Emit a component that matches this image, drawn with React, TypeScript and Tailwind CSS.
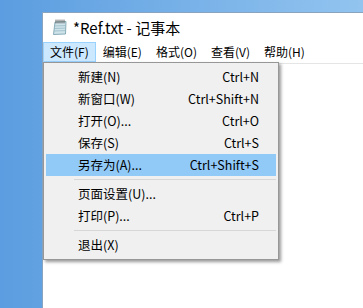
const font = "font-['Segoe_UI','Noto_Sans_CJK_SC',sans-serif]";

type Item = { label: string; shortcut?: string; active?: boolean } | "sep";

const items: Item[] = [
  { label: "新建(N)", shortcut: "Ctrl+N" },
  { label: "新窗口(W)", shortcut: "Ctrl+Shift+N" },
  { label: "打开(O)...", shortcut: "Ctrl+O" },
  { label: "保存(S)", shortcut: "Ctrl+S" },
  { label: "另存为(A)...", shortcut: "Ctrl+Shift+S", active: true },
  "sep",
  { label: "页面设置(U)..." },
  { label: "打印(P)...", shortcut: "Ctrl+P" },
  "sep",
  { label: "退出(X)" },
];

const menus = ["文件(F)", "编辑(E)", "格式(O)", "查看(V)", "帮助(H)"];

const NotepadIcon = () => (
  <svg width="16" height="16" viewBox="0 0 16 16">
    <path d="M3 3 L14 2.5 L13.5 15 L1.5 15.5 Z" fill="#cfe3ea" stroke="#6f9aa8" strokeWidth="0.8" />
    <path d="M2.2 7 L13.8 6.6 M2 9.5 L13.7 9.1 M1.9 12 L13.6 11.6" stroke="#8fb4c2" strokeWidth="0.7" />
    {[4, 6, 8, 10, 12].map((x) => (
      <path key={x} d={`M${x} 1 L${x} 4`} stroke="#555" strokeWidth="0.9" strokeLinecap="round" />
    ))}
  </svg>
);

export default function App() {
  return (
    <div
      className={`relative w-[363px] h-[308px] overflow-hidden bg-gradient-to-r from-[#5b9de0] to-[#92c4ef] pt-[12px] pl-[42px] ${font}`}
    >
      <div className="w-[340px] h-[310px] bg-white border-l border-t border-[#8aa4bf] flex flex-col">
        <div className="h-[28px] flex items-center pl-[9px] gap-[5px]">
          <NotepadIcon />
          <span className="text-[15px] text-black leading-none">*Ref.txt - 记事本</span>
        </div>
        <div className="h-[22px] flex items-stretch text-[12px] text-black">
          {menus.map((m, i) => (
            <div
              key={m}
              className={`flex items-center px-[6px] my-[1px] border ${
                i === 0 ? "bg-[#cce8ff] border-[#99d1ff]" : "border-transparent"
              }`}
            >
              {m}
            </div>
          ))}
        </div>
        <div className="flex-1 border-t border-[#e5e5e5] bg-white" />
      </div>

      <div className="absolute left-[43px] top-[62px] w-[236px] bg-[#f0f0f0] border border-[#979797] shadow-[2px_2px_3px_rgba(0,0,0,0.4)] py-[3px] px-[2px] text-[12.5px] text-black">
        {items.map((it, i) =>
          it === "sep" ? (
            <div key={i} className="h-[7px] flex items-center pl-[28px]">
              <div className="h-px w-full bg-[#d7d7d7]" />
            </div>
          ) : (
            <div
              key={i}
              className={`h-[22px] flex items-center justify-between pl-[32px] pr-[17px] ${
                it.active ? "bg-[#91c9f7]" : ""
              }`}
            >
              <span>{it.label}</span>
              {it.shortcut && <span>{it.shortcut}</span>}
            </div>
          )
        )}
      </div>
    </div>
  );
}
